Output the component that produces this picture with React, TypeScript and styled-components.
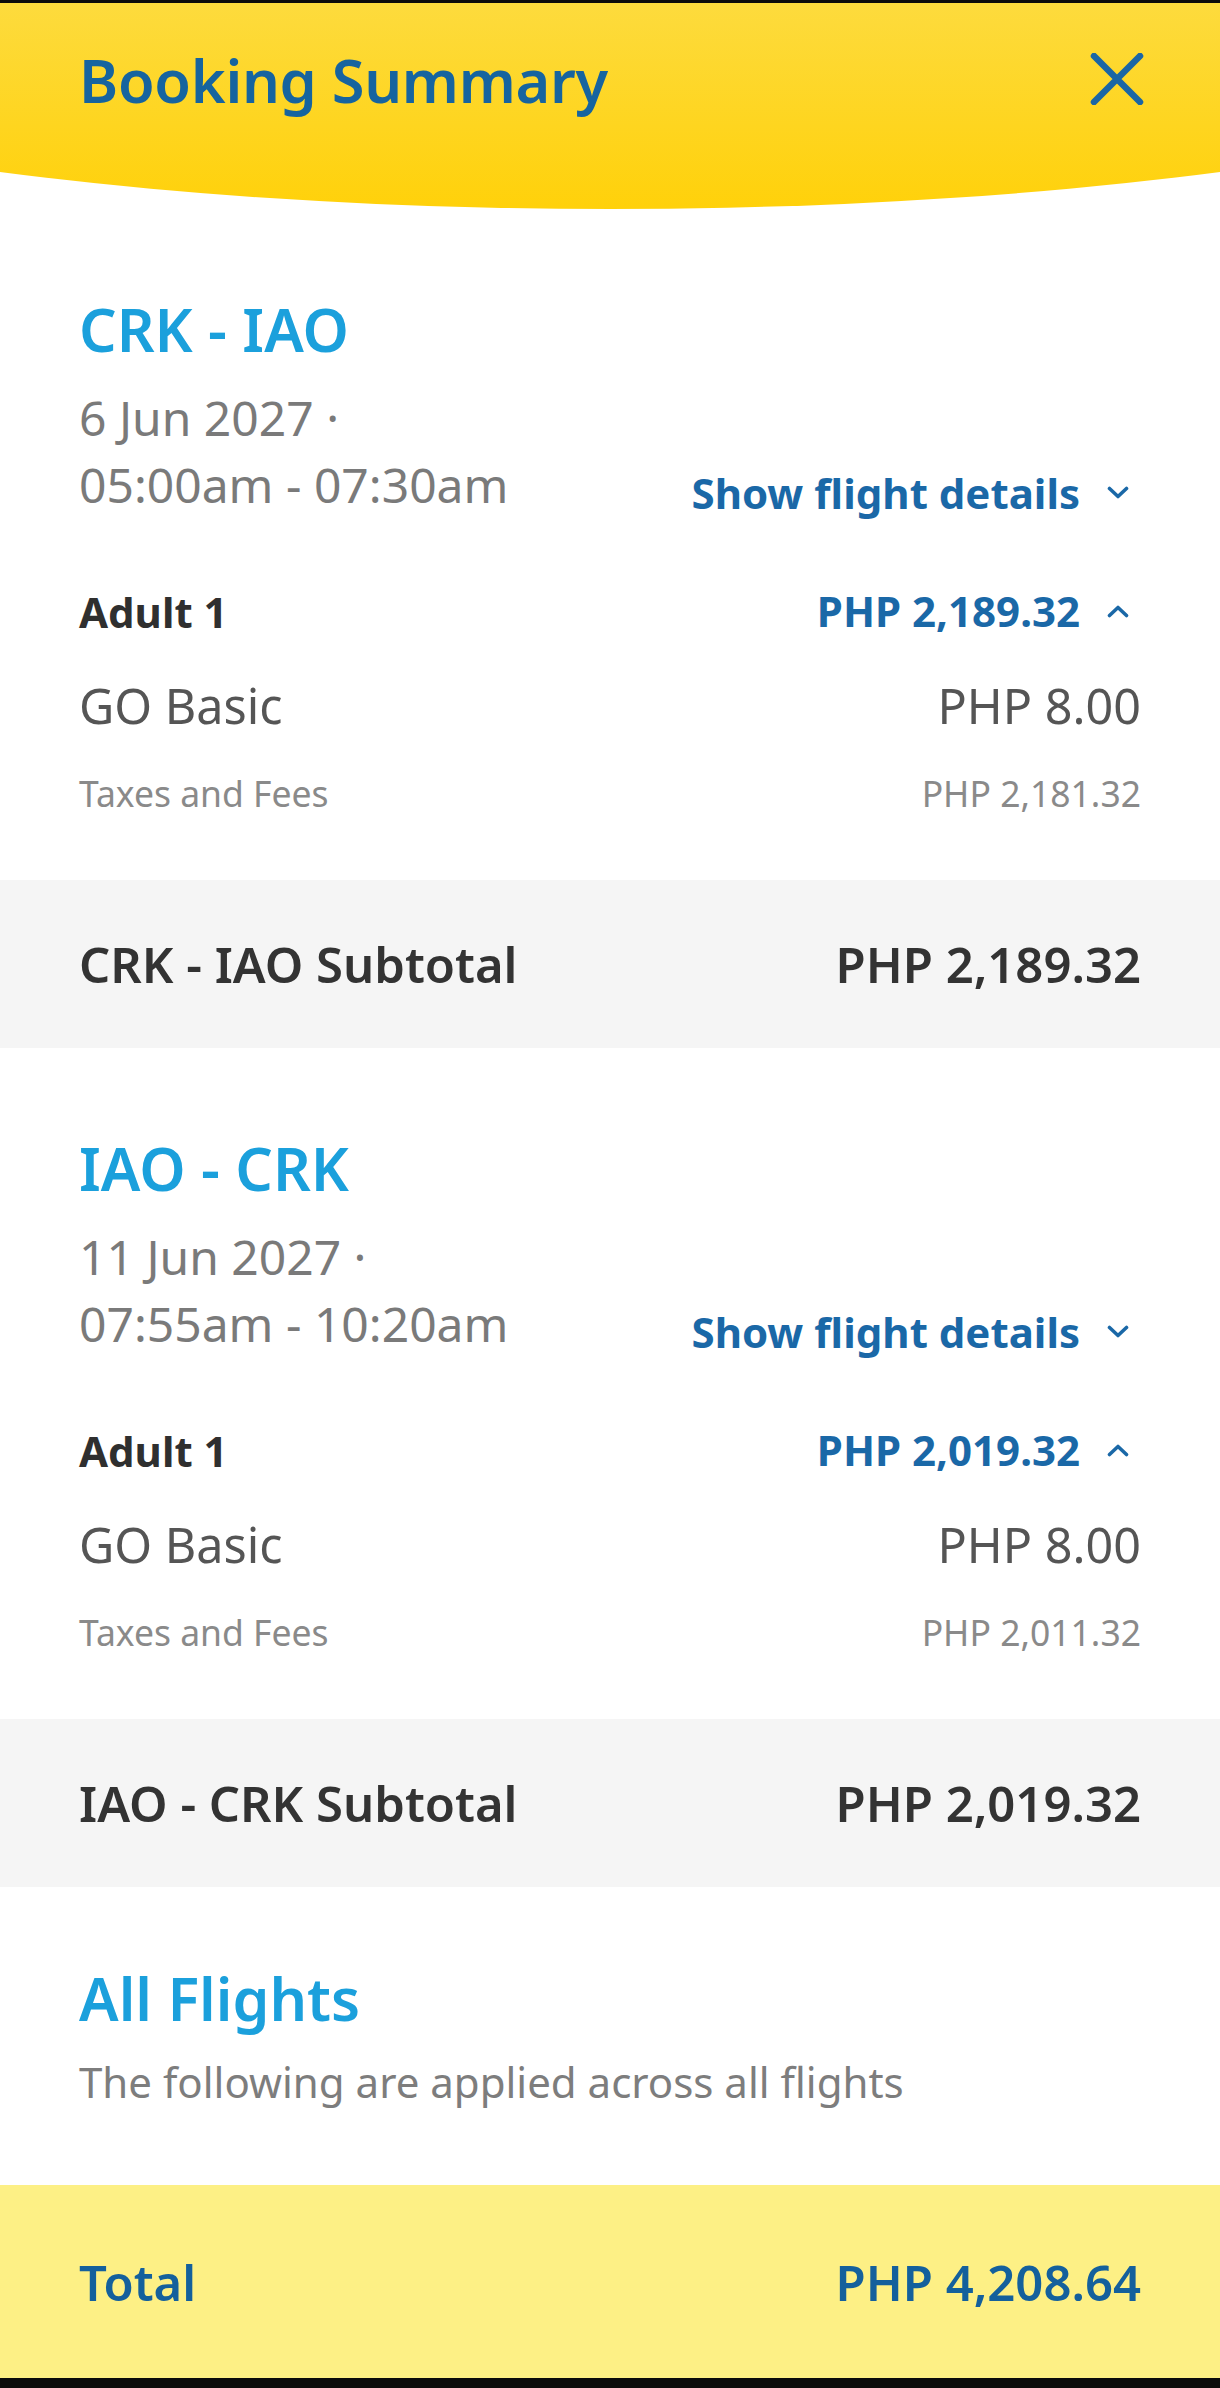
import styled, { createGlobalStyle } from 'styled-components';

const GlobalStyle = createGlobalStyle`
  html, body {
    margin: 0;
    padding: 0;
    background: #ffffff;
  }
  body {
    font-family: 'Noto Sans', 'Open Sans', Arial, sans-serif;
    -webkit-font-smoothing: antialiased;
  }
  * {
    box-sizing: border-box;
  }
`;

const Page = styled.div`
  width: 1220px;
  height: 2388px;
  display: flex;
  flex-direction: column;
  border-top: 3px solid #0b0b0b;
  border-bottom: 10px solid #0b0b0b;
  background: #ffffff;
  overflow: hidden;
`;

const Header = styled.header`
  height: 206px;
  flex-shrink: 0;
  padding: 0 79px;
  background: linear-gradient(180deg, #fddb3d 0%, #fed51f 60%, #ffd10a 100%);
  clip-path: ellipse(1200px 266px at 50% -60px);
`;

const HeaderRow = styled.div`
  height: 152px;
  display: flex;
  align-items: center;
  justify-content: space-between;
`;

const Title = styled.h1`
  margin: 0;
  font-size: 59.5px;
  font-weight: 600;
  color: #16649f;
  letter-spacing: -0.3px;
`;

const CloseButton = styled.button`
  border: 0;
  background: none;
  padding: 0;
  margin-right: -3px;
  display: flex;
  cursor: pointer;
`;

const Section = styled.section`
  padding: 80px 79px 62px;
  flex-shrink: 0;
`;

const RouteTitle = styled.h2`
  margin: 0;
  font-size: 59px;
  line-height: 80px;
  font-weight: 600;
  color: #1ba0dc;
`;

const DateRow = styled.div`
  margin-top: 14.5px;
  display: flex;
  justify-content: space-between;
  align-items: flex-end;
`;

const DateText = styled.div`
  font-size: 48px;
  line-height: 67px;
  color: #7a7a7a;
`;

const Toggle = styled.a`
  display: flex;
  align-items: center;
  gap: 27px;
  padding-right: 12px;
  font-size: 42px;
  line-height: 50px;
  font-weight: 700;
  color: #1a68a7;
  text-decoration: none;
`;

const Row = styled.div<{ $h: number; $gap: number }>`
  height: ${(p) => p.$h}px;
  margin-top: ${(p) => p.$gap}px;
  display: flex;
  align-items: center;
  justify-content: space-between;
`;

const StrongLabel = styled.span`
  font-size: 42px;
  font-weight: 700;
  color: #2f2f2f;
`;

const FareLabel = styled.span`
  font-size: 48.5px;
  color: #555555;
`;

const FeeLabel = styled.span`
  font-size: 35.5px;
  color: #8a8a8a;
`;

const SubtotalBar = styled.div`
  height: 168px;
  flex-shrink: 0;
  padding: 0 79px;
  background: #f5f5f5;
  display: flex;
  align-items: center;
  justify-content: space-between;
  font-size: 49px;
  font-weight: 600;
  color: #333333;
`;

const AllFlights = styled.section`
  padding: 71px 79px 75px;
  flex-shrink: 0;
`;

const Note = styled.p`
  margin: 16px 0 0;
  font-size: 42px;
  line-height: 56px;
  color: #7d7d7d;
`;

const TotalBar = styled.div`
  flex: 1;
  padding: 0 79px;
  background: #fdf085;
  display: flex;
  align-items: center;
  justify-content: space-between;
  font-size: 49px;
  font-weight: 600;
  color: #14609c;
`;

const Chevron = ({ up }: { up?: boolean }) => (
  <svg width='22' height='13' viewBox='0 0 22 13' fill='none'>
    <path
      d={up ? 'M2.5 10.5 L11 2.5 L19.5 10.5' : 'M2.5 2.5 L11 10.5 L19.5 2.5'}
      stroke='#1a68a7'
      strokeWidth='3.6'
      strokeLinecap='round'
      strokeLinejoin='round'
    />
  </svg>
);

const CloseIcon = () => (
  <svg width='54' height='52' viewBox='0 0 54 52' fill='none'>
    <path d='M4 3 L50 49 M50 3 L4 49' stroke='#1a66a5' strokeWidth='6.5' strokeLinecap='round' />
  </svg>
);

type Flight = {
  route: string;
  date: string;
  time: string;
  adultTotal: string;
  fare: string;
  taxes: string;
};

const flights: Flight[] = [
  {
    route: 'CRK - IAO',
    date: '6 Jun 2027 ·',
    time: '05:00am - 07:30am',
    adultTotal: 'PHP 2,189.32',
    fare: 'PHP 8.00',
    taxes: 'PHP 2,181.32',
  },
  {
    route: 'IAO - CRK',
    date: '11 Jun 2027 ·',
    time: '07:55am - 10:20am',
    adultTotal: 'PHP 2,019.32',
    fare: 'PHP 8.00',
    taxes: 'PHP 2,011.32',
  },
];

const FlightBlock = ({ flight }: { flight: Flight }) => (
  <>
    <Section>
      <RouteTitle>{flight.route}</RouteTitle>
      <DateRow>
        <DateText>
          {flight.date}
          <br />
          {flight.time}
        </DateText>
        <Toggle href='#'>
          Show flight details
          <Chevron />
        </Toggle>
      </DateRow>
      <Row $h={60} $gap={63.5}>
        <StrongLabel>Adult 1</StrongLabel>
        <Toggle href='#'>
          {flight.adultTotal}
          <Chevron up />
        </Toggle>
      </Row>
      <Row $h={64} $gap={32}>
        <FareLabel>GO Basic</FareLabel>
        <FareLabel>{flight.fare}</FareLabel>
      </Row>
      <Row $h={50} $gap={31}>
        <FeeLabel>Taxes and Fees</FeeLabel>
        <FeeLabel>{flight.taxes}</FeeLabel>
      </Row>
    </Section>
    <SubtotalBar>
      <span>{flight.route} Subtotal</span>
      <span>{flight.adultTotal}</span>
    </SubtotalBar>
  </>
);

export default function App() {
  return (
    <>
      <GlobalStyle />
      <Page>
        <Header>
          <HeaderRow>
            <Title>Booking Summary</Title>
            <CloseButton aria-label='Close'>
              <CloseIcon />
            </CloseButton>
          </HeaderRow>
        </Header>
        {flights.map((f) => (
          <FlightBlock key={f.route} flight={f} />
        ))}
        <AllFlights>
          <RouteTitle>All Flights</RouteTitle>
          <Note>The following are applied across all flights</Note>
        </AllFlights>
        <TotalBar>
          <span>Total</span>
          <span>PHP 4,208.64</span>
        </TotalBar>
      </Page>
    </>
  );
}
